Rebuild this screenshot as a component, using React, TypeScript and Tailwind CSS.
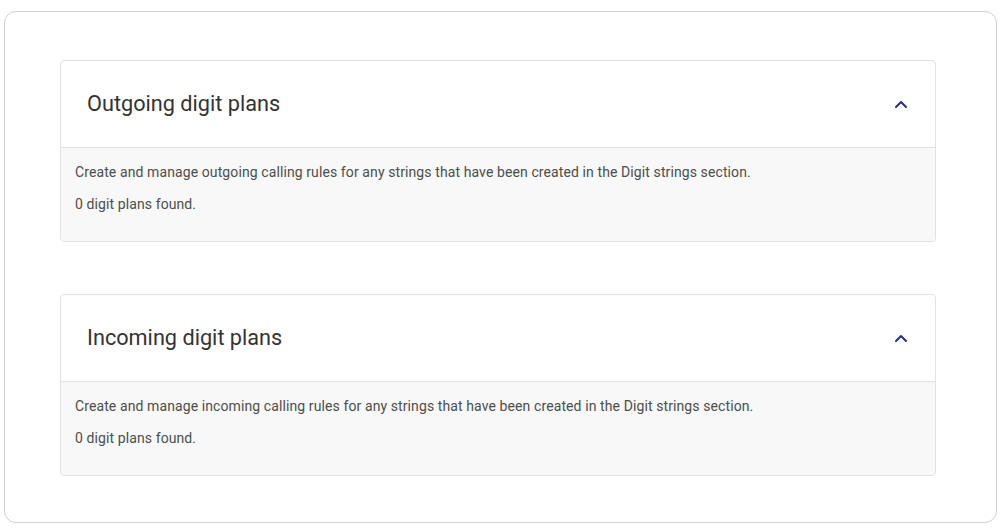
const plans = [
  {
    id: "outgoing",
    title: "Outgoing digit plans",
    description:
      "Create and manage outgoing calling rules for any strings that have been created in the Digit strings section.",
  },
  {
    id: "incoming",
    title: "Incoming digit plans",
    description:
      "Create and manage incoming calling rules for any strings that have been created in the Digit strings section.",
  },
];

function ChevronUp() {
  return (
    <svg width="14" height="10" viewBox="0 0 14 10" fill="none">
      <path d="M2 8 L7 3 L12 8" stroke="#2c2c80" strokeWidth="2" strokeLinecap="round" strokeLinejoin="round" />
    </svg>
  );
}

function PlanSection({ title, description }: { title: string; description: string }) {
  return (
    <section className="w-[876px] rounded-[4px] border border-[#e2e2e2] bg-white">
      <div className="flex h-[87px] items-center justify-between border-b border-[#e2e2e2] pl-[26px] pr-[27px]">
        <h2 className="text-[21.7px] font-normal text-[#333333]">{title}</h2>
        <ChevronUp />
      </div>
      <div className="h-[93px] rounded-b-[4px] bg-[#f8f8f8] px-[14px] pt-[14px] text-[14px] leading-[20px] tracking-[0.1px] text-[#4d4d4d]">
        <p>{description}</p>
        <p className="mt-[12px]">0 digit plans found.</p>
      </div>
    </section>
  );
}

export default function App() {
  return (
    <div className="h-[531px] w-[1002px] bg-white pl-[4px] pt-[11px] font-['Roboto',sans-serif]">
      <div className="flex h-[512px] w-[993px] flex-col gap-[52px] rounded-[12px] border border-[#cfcfcf] pl-[55px] pt-[48px]">
        {plans.map((plan) => (
          <PlanSection key={plan.id} title={plan.title} description={plan.description} />
        ))}
      </div>
    </div>
  );
}
